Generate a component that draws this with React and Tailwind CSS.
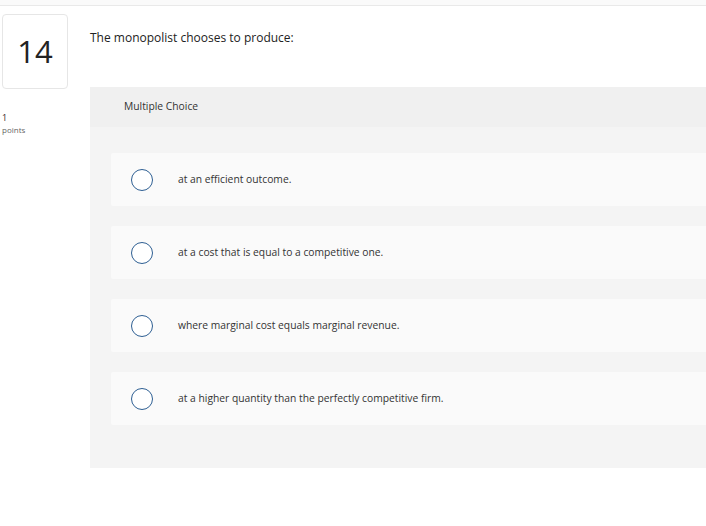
const options = [
  'at an efficient outcome.',
  'at a cost that is equal to a competitive one.',
  'where marginal cost equals marginal revenue.',
  'at a higher quantity than the perfectly competitive firm.',
];

const Option = ({ text }) => (
  <label className="flex items-center h-[53px] bg-[#fafafa] rounded-l-[2px] cursor-pointer">
    <span className="ml-[20px] w-[22px] h-[22px] rounded-full border-[1.5px] border-[#2e5f93] bg-white shrink-0" />
    <span className="ml-[25px] text-[10.3px] text-[#333333]">{text}</span>
  </label>
);

export default function App() {
  return (
    <div className="w-[706px] h-[526px] bg-white overflow-hidden font-['Open_Sans',sans-serif]">
      {/* top strip */}
      <div className="h-[6px] bg-[#fafafa] border-b border-[#e9e9e9]" />

      <div className="flex">
        {/* left column */}
        <div className="w-[90px] shrink-0 pl-[2px] pt-[8px]">
          <div className="w-[66px] h-[75px] border border-[#e6e6e6] rounded-[4px] flex items-center justify-center">
            <span className="text-[31px] text-[#222222] leading-none">14</span>
          </div>
          <div className="mt-[22px] text-[9px] leading-[13px] text-[#3a2a2a]">1</div>
          <div className="text-[8px] leading-[11px] text-[#666666]">points</div>
        </div>

        {/* question */}
        <div className="flex-1">
          <p className="mt-[23px] text-[12px] leading-[18px] text-[#222222]">The monopolist chooses to produce:</p>

          <div className="mt-[40px] bg-[#f4f4f4] h-[381px]">
            <div className="h-[40px] bg-[#f0f0f0] flex items-center pl-[34px] text-[10.3px] text-[#333333]">
              Multiple Choice
            </div>
            <div className="pl-[21px] pt-[26px] flex flex-col gap-[20px]">
              {options.map((o) => (
                <Option key={o} text={o} />
              ))}
            </div>
          </div>
        </div>
      </div>
    </div>
  );
}
